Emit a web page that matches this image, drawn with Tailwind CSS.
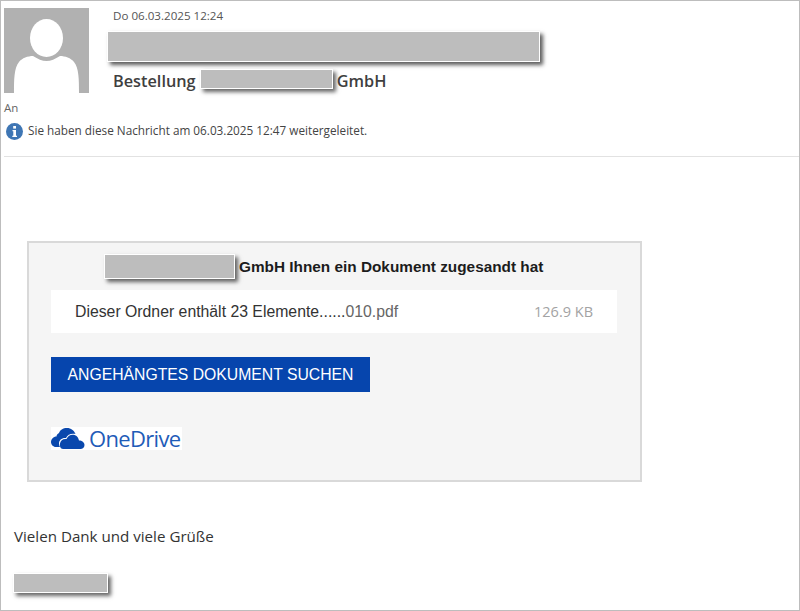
<!DOCTYPE html>
<html lang="de">
<head>
<meta charset="utf-8">
<script src="https://cdn.jsdelivr.net/npm/@tailwindcss/browser@4"></script>
</head>
<body class="bg-white">
<div class="w-[800px] h-[611px] overflow-hidden border border-[#bdbdbd] bg-white font-['Open_Sans',sans-serif] text-[#333]">
  <header class="h-[156px] border-b border-[#e2e2e2] ml-[3px] relative">
    <div class="flex pt-[7px]">
      <svg class="w-[85px] h-[85px] shrink-0" viewBox="0 0 85 85">
        <rect width="85" height="85" fill="#b1b1b1"/>
        <path d="M10 85 C10 72 10 60 15 54 C18 50 24 48 29 48 C34 51 38 53 42.500 53 C47 53 51 51 56 48 C61 48 67 50 70 54 C75 60 75 72 75 85 Z" fill="#fff"/>
        <ellipse cx="42.500" cy="30" rx="16.500" ry="19" fill="#fff"/>
      </svg>
      <div class="ml-[18px] min-w-0">
        <div class="pl-[6px] text-[11.600px] leading-[16px] text-[#555]">Do 06.03.2025 12:24</div>
        <div class="w-[433px] h-[31px] mt-[7px] bg-[#bdbdbd] border border-white shadow-[3px_3px_4px_rgba(0,0,0,0.65)]"></div>
        <div class="flex items-center pl-[6px] mt-[7px] h-[24px] text-[16.300px] font-semibold text-[#3f3f3f]">
          <span>Bestellung</span>
          <div class="w-[133px] h-[20px] -mt-[4px] ml-[4px] mr-[4px] bg-[#bdbdbd] border border-white shadow-[3px_3px_4px_rgba(0,0,0,0.6)]"></div>
          <span>GmbH</span>
        </div>
      </div>
    </div>
    <div class="text-[11.500px] leading-[14px] mt-[8px] text-[#666]">An</div>
    <div class="flex items-center gap-[5px] ml-[2px] mt-[7px] h-[18px]">
      <svg class="w-[17px] h-[17px] shrink-0" viewBox="0 0 17 17">
        <circle cx="8.500" cy="8.500" r="8.500" fill="#3f76b4"/>
        <rect x="7.200" y="3" width="2.800" height="2.600" fill="#fff"/>
        <path d="M6.500 7 H10 V12.800 H11 V14 H6.300 V12.800 H7.300 V8.200 H6.500 Z" fill="#fff"/>
      </svg>
      <span class="text-[11.750px] text-[#444]">Sie haben diese Nachricht am 06.03.2025 12:47 weitergeleitet.</span>
    </div>
  </header>
  <main class="pl-[26px] pt-[84px]">
    <section class="w-[615px] h-[241px] bg-[#f5f5f5] border-2 border-[#d9d9d9] pl-[22px] font-['Liberation_Sans',sans-serif]">
      <div class="flex items-center pl-[53px] h-[47px]">
        <div class="w-[131px] h-[25px] bg-[#bdbdbd] border border-white shadow-[3px_3px_4px_rgba(0,0,0,0.6)]"></div>
        <span class="ml-[4px] text-[15.350px] font-bold text-[#1c1c1c]">GmbH Ihnen ein Dokument zugesandt hat</span>
      </div>
      <div class="w-[566px] h-[43px] bg-white flex items-center justify-between pl-[24px] pr-[24px]">
        <span class="text-[15.800px] text-[#333]">Dieser Ordner enthält 23 Elemente......<span class="text-[#666]">010.pdf</span></span>
        <span class="font-['Open_Sans',sans-serif] text-[14.500px] text-[#a3a3a3]">126.9 KB</span>
      </div>
      <div class="w-[319px] h-[35px] mt-[24px] bg-[#0645ad] flex items-center justify-center text-[15.750px] text-white">ANGEHÄNGTES DOKUMENT SUCHEN</div>
      <div class="w-[131px] h-[23px] mt-[35px] bg-white flex items-center font-['Open_Sans',sans-serif]">
        <svg class="w-[34px] h-[23px] shrink-0" viewBox="0 0 34 23">
          <path d="M8 6 C9 3 12 1 16 1 C20 1 23 3.500 24.500 7 C20.500 6 16.500 7.500 15 11 C11 10.500 8 13 8 16.500 C8 18 8.500 19 9 20 L5 20 C2 20 0 17.500 0 15 C0 12 2.500 9.500 5.500 9.500 C5.500 8 6.500 7 8 6 Z" fill="#0a48ad"/>
          <path d="M12 22 C9.500 22 8.500 19 9 16.500 C9.500 13.500 12 11.500 15.500 12 C17 8.500 20.500 7 23.500 8 C26 8.800 27.500 11 28 13.500 C31 13.500 33.500 15.500 33.500 18 C33.500 20.500 31.500 22 29.500 22 Z" fill="#0a48ad"/>
        </svg>
        <span class="ml-[4px] text-[22px] leading-[23px] tracking-[-0.03em] text-[#1f5cb8]">OneDrive</span>
      </div>
    </section>
    <p class="-ml-[13px] mt-[44px] text-[15.150px] leading-[20px] text-[#333]">Vielen Dank und viele Grüße</p>
    <div class="-ml-[14px] mt-[27px] w-[95px] h-[20px] bg-[#bdbdbd] border border-white shadow-[3px_3px_4px_rgba(0,0,0,0.6)]"></div>
  </main>
</div>
</body>
</html>
